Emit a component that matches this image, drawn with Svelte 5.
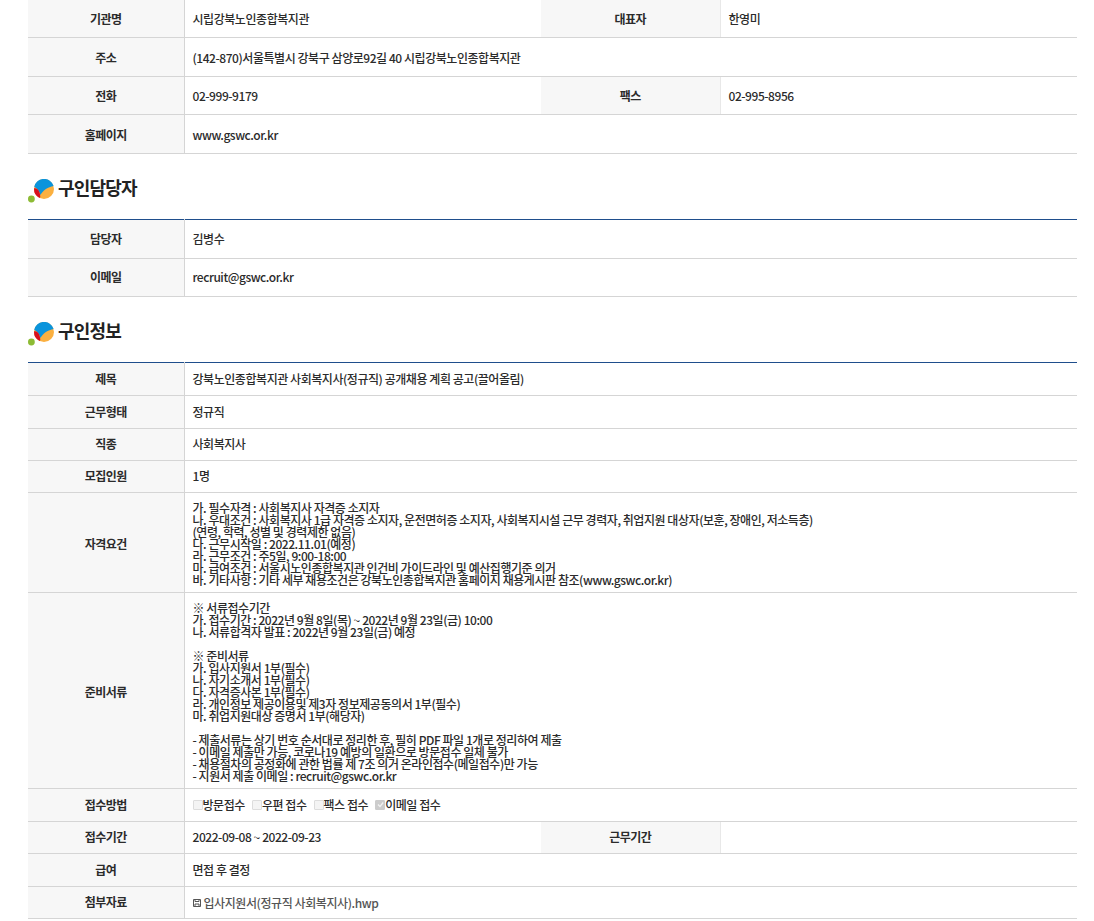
<script lang="ts">
	const agency = [
		{ h: 37, cells: [['기관명', '시립강북노인종합복지관'], ['대표자', '한영미']] },
		{ h: 39, cells: [['주소', '(142-870)서울특별시 강북구 삼양로92길 40 시립강북노인종합복지관']] },
		{ h: 38, cells: [['전화', '02-999-9179'], ['팩스', '02-995-8956']] },
		{ h: 39, cells: [['홈페이지', 'www.gswc.or.kr']] }
	];

	const contact = [
		{ h: 39, cells: [['담당자', '김병수']] },
		{ h: 38, cells: [['이메일', 'recruit@gswc.or.kr']] }
	];

	const qualification = `가. 필수자격 : 사회복지사 자격증 소지자
나. 우대조건 : 사회복지사 1급 자격증 소지자, 운전면허증 소지자, 사회복지시설 근무 경력자, 취업지원 대상자(보훈, 장애인, 저소득층)
(연령, 학력, 성별 및 경력제한 없음)
다. 근무시작일 : 2022.11.01(예정)
라. 근무조건 : 주5일, 9:00-18:00
마. 급여조건 : 서울시노인종합복지관 인건비 가이드라인 및 예산집행기준 의거
바. 기타사항 : 기타 세부 채용조건은 강북노인종합복지관 홈페이지 채용게시판 참조(www.gswc.or.kr)`;

	const documents = `※ 서류접수기간
가. 접수기간 : 2022년 9월 8일(목) ~ 2022년 9월 23일(금) 10:00
나. 서류합격자 발표 : 2022년 9월 23일(금) 예정

※ 준비서류
가. 입사지원서 1부(필수)
나. 자기소개서 1부(필수)
다. 자격증사본 1부(필수)
라. 개인정보 제공이용및 제3자 정보제공동의서 1부(필수)
마. 취업지원대상 증명서 1부(해당자)

- 제출서류는 상기 번호 순서대로 정리한 후, 필히 PDF 파일 1개로 정리하여 제출
- 이메일 제출만 가능, 코로나19 예방의 일환으로 방문접수 일체 불가
- 채용절차의 공정화에 관한 법률 제 7조 의거 온라인접수(메일접수)만 가능
- 지원서 제출 이메일 : recruit@gswc.or.kr`;

	const methods = [
		{ label: '방문접수', checked: false },
		{ label: '우편 접수', checked: false },
		{ label: '팩스 접수', checked: false },
		{ label: '이메일 접수', checked: true }
	];
</script>

{#snippet heading(title: string)}
	<h2 class="heading">
		<svg class="mark" width="26" height="24" viewBox="0 0 26 24" aria-hidden="true">
			<circle cx="16" cy="10" r="10" fill="#fbb040" />
			<path d="M6.2 8A10 10 0 0 1 25.6 7C20 8 15 11 12.5 16 11.5 12 9 9 6.2 8Z" fill="#0a94dc" />
			<path d="M6 9.5C9 8.5 12 12 12.3 18L11.5 18.9A10 10 0 0 1 6 9.5Z" fill="#d8111f" />
			<circle cx="3.4" cy="20" r="3.4" fill="#8dbb35" />
		</svg>
		{title}
	</h2>
{/snippet}

{#snippet rows(list: { h: number; cells: string[][] }[])}
	{#each list as row}
		<tr style="height: {row.h}px">
			{#each row.cells as cell}
				<th>{cell[0]}</th>
				<td colspan={row.cells.length === 1 ? 3 : 1}>{cell[1]}</td>
			{/each}
		</tr>
	{/each}
{/snippet}

{#snippet colgroup()}
	<colgroup>
		<col class="c1" />
		<col class="c2" />
		<col class="c3" />
		<col />
	</colgroup>
{/snippet}

<div class="page">
	<table>
		{@render colgroup()}
		<tbody>
			{@render rows(agency)}
		</tbody>
	</table>

	{@render heading('구인담당자')}
	<table class="top-line">
		{@render colgroup()}
		<tbody>
			{@render rows(contact)}
		</tbody>
	</table>

	{@render heading('구인정보')}
	<table class="top-line">
		{@render colgroup()}
		<tbody>
			<tr style="height: 33px"><th>제목</th><td colspan="3">강북노인종합복지관 사회복지사(정규직) 공개채용 계획 공고(끌어올림)</td></tr>
			<tr style="height: 33px"><th>근무형태</th><td colspan="3">정규직</td></tr>
			<tr style="height: 32px"><th>직종</th><td colspan="3">사회복지사</td></tr>
			<tr style="height: 32px"><th>모집인원</th><td colspan="3">1명</td></tr>
			<tr class="tall" style="height: 100px"><th>자격요건</th><td colspan="3" class="pre">{qualification}</td></tr>
			<tr class="tall" style="height: 196px"><th>준비서류</th><td colspan="3" class="pre">{documents}</td></tr>
			<tr style="height: 33px">
				<th>접수방법</th>
				<td colspan="3">
					<div class="methods">
						{#each methods as m}
							<span class="method">
								<i class="box" class:checked={m.checked}>
									{#if m.checked}
										<svg width="9" height="9" viewBox="0 0 9 9" aria-hidden="true">
											<path d="M2 4.5l2 2 3.2-4" fill="none" stroke="#f2f2f2" stroke-width="1.3" />
										</svg>
									{/if}
								</i>{m.label}
							</span>
						{/each}
					</div>
				</td>
			</tr>
			<tr style="height: 32px"><th>접수기간</th><td>2022-09-08 ~ 2022-09-23</td><th>근무기간</th><td></td></tr>
			<tr style="height: 33px"><th>급여</th><td colspan="3">면접 후 결정</td></tr>
			<tr style="height: 32px">
				<th>첨부자료</th>
				<td colspan="3">
					<span class="file">
						<svg width="8" height="8" viewBox="0 0 8 8" aria-hidden="true">
							<path d="M.5.5h7v7h-7zM2 .5v2h4v-2M2 7.5V5h4v2.5" fill="none" stroke="#555" />
						</svg>
						입사지원서(정규직 사회복지사).hwp
					</span>
				</td>
			</tr>
		</tbody>
	</table>
</div>

<style>
	:global(body) {
		margin: 0;
		background: #fff;
	}

	.page {
		width: 1049px;
		margin-left: 28px;
		padding-bottom: 3px;
		font-family: 'Noto Sans CJK KR', 'Noto Sans', sans-serif;
		font-size: 12px;
		color: #2b2b2b;
		letter-spacing: -0.45px;
	}

	table {
		width: 100%;
		table-layout: fixed;
		border-collapse: collapse;
	}

	.c1 {
		width: 156px;
	}

	.c2 {
		width: 357px;
	}

	.c3 {
		width: 179px;
	}

	th,
	td {
		padding: 2px 8px 0;
		border-bottom: 1px solid #d5d5d5;
		line-height: 12px;
		vertical-align: middle;
	}

	th {
		background: #f7f7f7;
		font-weight: 700;
		text-align: center;
		letter-spacing: -0.6px;
		border-right: 1px solid #d5d5d5;
	}

	td + th {
		border-right: 1px solid #e8e8e8;
	}

	td {
		font-weight: 500;
		text-align: left;
	}

	.top-line th,
	.top-line td {
		padding-top: 0;
	}

	.top-line .tall th,
	.top-line .tall td {
		padding-top: 3px;
	}

	.top-line {
		border-top: 1px solid #1f4e8c;
	}

	.heading {
		display: flex;
		align-items: center;
		gap: 4px;
		height: 65px;
		margin: 0;
		padding-top: 2px;
		box-sizing: border-box;
		font-size: 18px;
		font-weight: 700;
		color: #222;
		letter-spacing: -0.8px;
	}

	.mark {
		flex: none;
		margin-top: 8px;
	}

	.pre {
		white-space: pre-line;
	}

	.methods {
		display: flex;
		gap: 7px;
	}

	.method {
		display: inline-flex;
		align-items: center;
	}

	.box {
		display: block;
		width: 8px;
		height: 8px;
		border: 1px solid #ddd;
		background: #f4f4f4;
		border-radius: 1px;
		line-height: 0;
	}

	.box svg {
		margin: -0.5px;
	}

	.box.checked {
		background: #ccc;
		border-color: #ccc;
	}

	.file {
		display: inline-flex;
		align-items: center;
		gap: 3px;
		color: #555;
		letter-spacing: -0.42px;
	}
</style>
